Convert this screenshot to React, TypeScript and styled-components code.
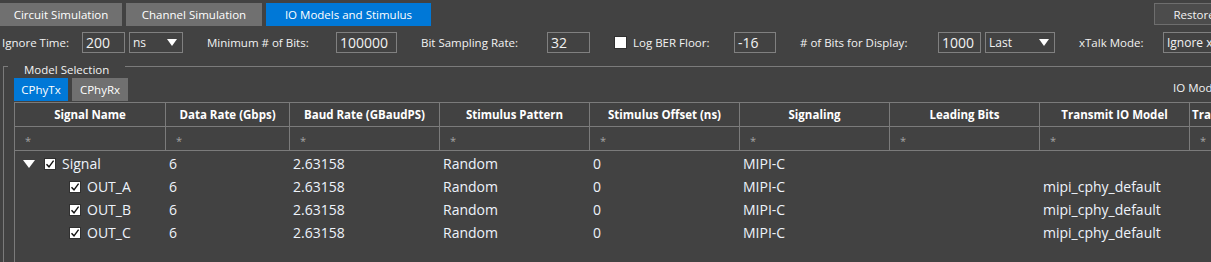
import React from 'react';
import styled, { createGlobalStyle } from 'styled-components';

const GlobalStyle = createGlobalStyle`
  body {
    margin: 0;
    background: #424242;
    overflow: hidden;
    font-family: 'Open Sans', 'Noto Sans', sans-serif;
  }
`;

const line = '#7b7b7b';

const Page = styled.div`
  width: 1240px;
  height: 262px;
  overflow: hidden;
  background: #424242;
  color: #f2f2f2;
`;

const TopBar = styled.div`
  display: flex;
  gap: 4px;
  padding: 3px 6px 0 0;
  height: 23px;
`;

const Tab = styled.div<{ $active?: boolean; $w: number }>`
  width: ${p => p.$w}px;
  height: 23px;
  display: flex;
  align-items: center;
  justify-content: center;
  font-size: 11.5px;
  color: #fff;
  background: ${p => (p.$active ? '#0078d7' : '#707070')};
`;

const RestoreButton = styled.div`
  margin-left: auto;
  width: 80px;
  height: 22px;
  box-sizing: border-box;
  border: 1px solid #6e6e6e;
  background: #4c4c4c;
  font-size: 11.5px;
  display: flex;
  align-items: center;
  justify-content: center;
`;

const OptionsRow = styled.div`
  display: flex;
  align-items: center;
  gap: 24px;
  margin-top: 6px;
  padding-left: 2px;
  height: 21px;
`;

const Field = styled.div`
  display: flex;
  align-items: center;
  gap: 4px;
`;

const Label = styled.span<{ $w?: number }>`
  width: ${p => (p.$w ? `${p.$w - 4}px` : 'auto')};
  font-size: 11.5px;
  white-space: nowrap;
`;

const TextBox = styled.div<{ $w: number }>`
  width: ${p => p.$w}px;
  height: 21px;
  box-sizing: border-box;
  border: 1px solid #808080;
  padding-left: 3px;
  font-size: 14px;
  line-height: 19px;
  white-space: nowrap;
  overflow: hidden;
`;

const Select = styled(TextBox)`
  display: flex;
  align-items: center;
  justify-content: space-between;
  padding-right: 5px;
  font-size: 12px;
`;

const Arrow = styled.span`
  width: 0;
  height: 0;
  border-left: 5px solid transparent;
  border-right: 5px solid transparent;
  border-top: 7px solid #fff;
`;

const BoxCheck = styled.span<{ $size?: number }>`
  width: ${p => p.$size ?? 12}px;
  height: ${p => p.$size ?? 12}px;
  background: #fff;
  border: 1px solid #303030;
  box-sizing: border-box;
  display: inline-flex;
  align-items: center;
  justify-content: center;
  flex-shrink: 0;
`;

const CheckField = styled.div`
  display: flex;
  align-items: center;
  gap: 6px;
`;

const GroupBox = styled.div`
  margin: 13px 0 0 3px;
  border-left: 1px solid ${line};
  height: 220px;
`;

const GroupTitle = styled.div`
  display: flex;
  align-items: flex-start;
  height: 12px;
`;

const TitleLine = styled.div<{ $w?: number }>`
  border-top: 1px solid ${line};
  ${p => (p.$w ? `width: ${p.$w}px;` : 'flex: 1;')}
`;

const TitleText = styled.span`
  padding: 0 16px;
  margin-top: -4px;
  font-size: 11.5px;
  line-height: 16px;
`;

const GroupBody = styled.div`
  padding-left: 10px;
`;

const SubTabRow = styled.div`
  display: flex;
  gap: 4px;
  height: 24px;
`;

const SideLabel = styled.span`
  margin-left: auto;
  width: 67px;
  overflow: hidden;
  white-space: nowrap;
  font-size: 11.5px;
  padding-top: 2px;
`;

const TableFrame = styled.div`
  border-left: 1px solid ${line};
  height: 180px;
`;

const Grid = styled.table`
  border-spacing: 0;
  table-layout: fixed;
  border-top: 1px solid ${line};
  width: 1325px;
`;

const HeadCell = styled.th<{ $left?: boolean }>`
  height: 24px;
  box-sizing: border-box;
  padding: 0 ${p => (p.$left ? '2px' : '0')};
  border-right: 1px solid ${line};
  border-bottom: 1px solid ${line};
  font-size: 11.5px;
  font-weight: 700;
  color: #fff;
  text-align: ${p => (p.$left ? 'left' : 'center')};
  white-space: nowrap;
  overflow: hidden;
`;

const FilterCell = styled.td`
  height: 24px;
  box-sizing: border-box;
  padding: 4px 0 0 10px;
  border-right: 1px solid ${line};
  border-bottom: 1px solid ${line};
  font-size: 11px;
  color: #a3a3a3;
  vertical-align: middle;
`;

const Cell = styled.td`
  height: 23px;
  box-sizing: border-box;
  padding: 2px 0 0 3px;
  font-size: 14px;
  line-height: 19px;
  color: #eef3fb;
  white-space: nowrap;
  overflow: hidden;
`;

const NameCell = styled.div<{ $indent: number }>`
  display: flex;
  align-items: center;
  padding-left: ${p => p.$indent}px;
`;

const Expander = styled.span`
  width: 0;
  height: 0;
  border-left: 6px solid transparent;
  border-right: 6px solid transparent;
  border-top: 8px solid #fff;
  margin-right: 9px;
`;

const NameText = styled.span`
  margin-left: 6px;
`;

const Check = () => (
  <BoxCheck>
    <svg width="10" height="10" viewBox="0 0 10 10">
      <path d="M1.5 5.2 L4 7.8 L8.6 1.6" fill="none" stroke="#111" strokeWidth="1.4" />
    </svg>
  </BoxCheck>
);

const widths = [151, 124, 150, 150, 150, 150, 150, 150, 150];
const headers = [
  'Signal Name',
  'Data Rate (Gbps)',
  'Baud Rate (GBaudPS)',
  'Stimulus Pattern',
  'Stimulus Offset (ns)',
  'Signaling',
  'Leading Bits',
  'Transmit IO Model',
  'Transmit IO Model Parameters',
];

type Row = { name: string; parent?: boolean; model: string };

const rows: Row[] = [
  { name: 'Signal', parent: true, model: '' },
  { name: 'OUT_A', model: 'mipi_cphy_default' },
  { name: 'OUT_B', model: 'mipi_cphy_default' },
  { name: 'OUT_C', model: 'mipi_cphy_default' },
];

const App: React.FC = () => {
  return (
    <Page>
      <GlobalStyle />
      <TopBar>
        <Tab $w={122}>Circuit Simulation</Tab>
        <Tab $w={136}>Channel Simulation</Tab>
        <Tab $w={165} $active>IO Models and Stimulus</Tab>
        <RestoreButton>Restore</RestoreButton>
      </TopBar>

      <OptionsRow>
        <Field>
          <Label $w={80}>Ignore Time:</Label>
          <TextBox $w={43}>200</TextBox>
          <Select $w={54}>ns<Arrow /></Select>
        </Field>
        <Field>
          <Label $w={129}>Minimum # of Bits:</Label>
          <TextBox $w={61}>100000</TextBox>
        </Field>
        <Field>
          <Label $w={126}>Bit Sampling Rate:</Label>
          <TextBox $w={43}>32</TextBox>
        </Field>
        <Field>
          <CheckField>
            <BoxCheck $size={13} />
            <Label $w={101}>Log BER Floor:</Label>
          </CheckField>
          <TextBox $w={42}>-16</TextBox>
        </Field>
        <Field>
          <Label $w={138}># of Bits for Display:</Label>
          <TextBox $w={43}>1000</TextBox>
          <Select $w={70}>Last<Arrow /></Select>
        </Field>
        <Field>
          <Label $w={84}>xTalk Mode:</Label>
          <Select $w={120}>Ignore xTalk<Arrow /></Select>
        </Field>
      </OptionsRow>

      <GroupBox>
        <GroupTitle>
          <TitleLine $w={4} />
          <TitleText>Model Selection</TitleText>
          <TitleLine />
        </GroupTitle>
        <GroupBody>
          <SubTabRow>
            <Tab $w={54} $active>CPhyTx</Tab>
            <Tab $w={56}>CPhyRx</Tab>
            <SideLabel>IO Model Library</SideLabel>
          </SubTabRow>
          <TableFrame>
            <Grid>
              <colgroup>
                {widths.map((w, i) => (
                  <col key={i} style={{ width: w }} />
                ))}
              </colgroup>
              <thead>
                <tr>
                  {headers.map((h, i) => (
                    <HeadCell key={h} $left={i === headers.length - 1}>{h}</HeadCell>
                  ))}
                </tr>
                <tr>
                  {headers.map(h => (
                    <FilterCell key={h}>*</FilterCell>
                  ))}
                </tr>
              </thead>
              <tbody>
                {rows.map(r => (
                  <tr key={r.name}>
                    <Cell>
                      <NameCell $indent={r.parent ? 5 : 51}>
                        {r.parent && <Expander />}
                        <Check />
                        <NameText>{r.name}</NameText>
                      </NameCell>
                    </Cell>
                    <Cell>6</Cell>
                    <Cell>2.63158</Cell>
                    <Cell>Random</Cell>
                    <Cell>0</Cell>
                    <Cell>MIPI-C</Cell>
                    <Cell></Cell>
                    <Cell>{r.model}</Cell>
                    <Cell></Cell>
                  </tr>
                ))}
              </tbody>
            </Grid>
          </TableFrame>
        </GroupBody>
      </GroupBox>
    </Page>
  );
};

export default App;
